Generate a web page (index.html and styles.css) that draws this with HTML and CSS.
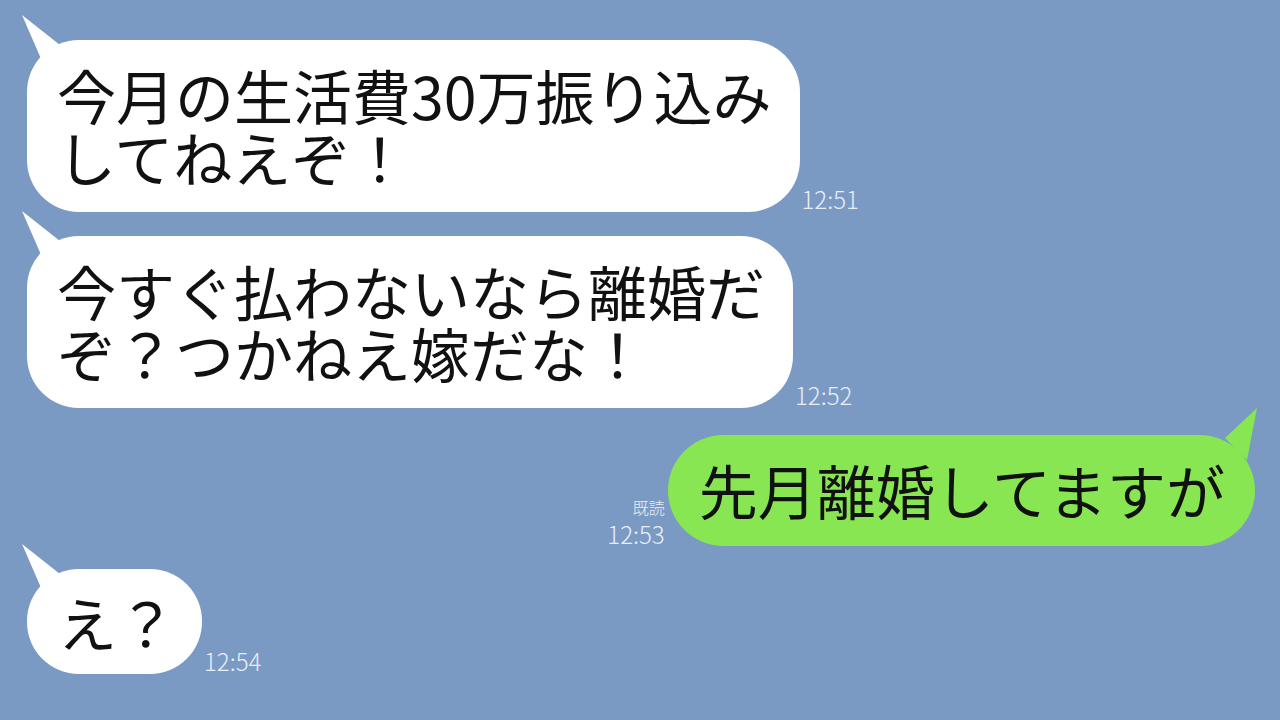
FILE: index.html
```html
<!DOCTYPE html>
<html lang="ja">
<head>
  <meta charset="UTF-8" />
  <meta name="viewport" content="width=device-width, initial-scale=1.0" />
  <title>トーク</title>
  <link rel="stylesheet" href="styles.css">
</head>
<body>
  <div class="chat">
    <div class="row row-first">
      <div class="bubble">今月の生活費30万振り込み<br>してねえぞ！</div>
      <div class="meta"><span class="time">12:51</span></div>
    </div>

    <div class="row row-second">
      <div class="bubble">今すぐ払わないなら離婚だ<br>ぞ？つかねえ嫁だな！</div>
      <div class="meta"><span class="time">12:52</span></div>
    </div>

    <div class="row row-mine">
      <div class="meta meta-mine">
        <span class="read">既読</span>
        <span class="time">12:53</span>
      </div>
      <div class="bubble bubble-mine">先月離婚してますが</div>
    </div>

    <div class="row row-last">
      <div class="bubble bubble-short">え？</div>
      <div class="meta"><span class="time">12:54</span></div>
    </div>
  </div>
</body>
</html>
```

FILE: styles.css
```css
body {
  margin: 0;
  padding: 0;
  width: 1280px;
  height: 720px;
  overflow: hidden;
  background-color: #7a9ac4;
  font-family: "Noto Sans CJK JP", "Noto Sans", sans-serif;
}

.chat {
  display: flex;
  flex-direction: column;
  padding: 40px 25px 0 27px;
}

.row {
  display: flex;
  align-items: flex-end;
}

.row-second {
  margin-top: 24px;
}

.row-mine {
  margin-top: 27px;
  justify-content: flex-end;
}

.row-last {
  margin-top: 23px;
}

.bubble {
  position: relative;
  background: white;
  color: #111;
  font-size: 59px;
  line-height: 62px;
  padding: 24px 28px 24px 30px;
  border-radius: 52px;
}

/* tail at top-left */
.bubble::before {
  content: "";
  position: absolute;
  left: -5px;
  top: -25px;
  width: 40px;
  height: 50px;
  background: inherit;
  clip-path: polygon(0 0, 38px 30px, 20px 46px);
}

.bubble-mine {
  background: #88e653;
  padding: 24px 30px 25px 31px;
  border-radius: 56px;
}

.bubble-mine::before {
  left: auto;
  right: -2px;
  top: -27px;
  width: 40px;
  height: 56px;
  clip-path: polygon(100% 0, 8px 30px, 30px 52px);
}

.bubble-short {
  padding: 22px 26px 21px 31px;
}

.meta {
  display: flex;
  flex-direction: column;
  color: #e8eef7;
  font-weight: 300;
  line-height: 1;
  margin-left: 2px;
  padding-bottom: 1px;
}

.meta-mine {
  align-items: flex-end;
  margin-left: 0;
  margin-right: 3px;
  padding-bottom: 0;
}

.time {
  font-size: 24px;
}

.read {
  font-size: 16px;
  margin-bottom: 7px;
}
```
